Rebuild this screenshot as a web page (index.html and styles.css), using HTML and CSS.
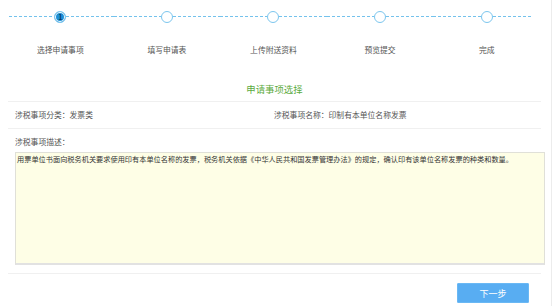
FILE: index.html
```html
<!DOCTYPE html>
<html lang="zh-CN">
<head>
    <meta charset="UTF-8">
    <meta name="viewport" content="width=device-width, initial-scale=1.0">
    <title>申请事项选择</title>
    <link rel="stylesheet" href="styles.css">
</head>
<body>
    <div class="page">
        <div class="steps">
            <div class="step step-first active">
                <div class="track"><span class="seg"></span><span class="dot">1</span><span class="seg"></span></div>
                <div class="step-label">选择申请事项</div>
            </div>
            <div class="step">
                <div class="track"><span class="seg"></span><span class="dot"></span><span class="seg"></span></div>
                <div class="step-label">填写申请表</div>
            </div>
            <div class="step">
                <div class="track"><span class="seg"></span><span class="dot"></span><span class="seg"></span></div>
                <div class="step-label">上传附送资料</div>
            </div>
            <div class="step">
                <div class="track"><span class="seg"></span><span class="dot"></span><span class="seg"></span></div>
                <div class="step-label">预览提交</div>
            </div>
            <div class="step step-last">
                <div class="track"><span class="seg"></span><span class="dot"></span><span class="seg"></span></div>
                <div class="step-label">完成</div>
            </div>
        </div>

        <div class="content">
            <h2 class="section-title">申请事项选择</h2>

            <div class="info-row">
                <div>涉税事项分类：发票类</div>
                <div>涉税事项名称：印制有本单位名称发票</div>
            </div>

            <div class="desc">
                <div class="desc-label">涉税事项描述：</div>
                <textarea class="desc-box" readonly>用票单位书面向税务机关要求使用印有本单位名称的发票，税务机关依据《中华人民共和国发票管理办法》的规定，确认印有该单位名称发票的种类和数量。</textarea>
            </div>

            <div class="actions">
                <button class="next-button">下一步</button>
            </div>
        </div>
    </div>
</body>
</html>
```

FILE: styles.css
```css
body {
    margin: 0;
    font-family: "Noto Sans CJK SC", "Liberation Sans", sans-serif;
    background-color: #fff;
    color: #555;
}

.page {
    width: 551px;
    height: 306px;
    border-right: 1px solid #ececec;
    overflow: hidden;
}

/* Step bar */
.steps {
    display: flex;
    margin-left: 7px;
    width: 533px;
}

.step {
    flex: 1;
    padding-top: 10px;
}

.track {
    display: flex;
    align-items: center;
    height: 13px;
}

.seg {
    flex: 1;
    height: 1px;
    background-image: repeating-linear-gradient(to right, #74c2ec 0 3px, transparent 3px 5px);
}

.step-first .seg:first-child {
    background-position: 2px 0;
    background-repeat: no-repeat;
}

.step-last .seg:last-child {
    background-size: 38px 1px;
    background-repeat: no-repeat;
}

.dot {
    width: 10px;
    height: 10px;
    border: 1.5px solid #7cc6ee;
    border-radius: 50%;
    background-color: #fff;
    font-size: 7px;
    line-height: 10px;
    text-align: center;
    color: #0c3c66;
    font-weight: bold;
}

.active .dot {
    background-color: #1c8fd6;
    box-shadow: inset 0 0 0 1px #fff;
}

.step-label {
    margin-top: 21px;
    font-size: 7.8px;
    line-height: 12px;
    text-align: center;
    color: #555;
}

/* Main content */
.content {
    margin-left: 8px;
    width: 533px;
}

.section-title {
    margin: 26px 0 0;
    padding-bottom: 5px;
    font-size: 9.4px;
    line-height: 14px;
    font-weight: normal;
    text-align: center;
    color: #5aaa3c;
    border-bottom: 1px solid #f0f0f0;
}

.info-row {
    display: grid;
    grid-template-columns: 259px 1fr;
    padding: 7px 0 7px 7px;
    font-size: 7.8px;
    line-height: 12px;
    color: #555;
    border-bottom: 1px solid #f0f0f0;
}

.desc {
    padding: 7px 0 8px 7px;
    border-bottom: 1px solid #f0f0f0;
}

.desc-label {
    font-size: 7.8px;
    line-height: 12px;
    color: #555;
}

.desc-box {
    display: block;
    margin-top: 4px;
    width: 530px;
    height: 113px;
    box-sizing: border-box;
    padding: 1px 1px;
    border: 1px solid #e0e0d8;
    border-bottom: 2px solid #e2e2e2;
    background-color: #fefee6;
    font-family: "Noto Sans CJK SC", sans-serif;
    font-size: 7.2px;
    line-height: 10px;
    color: #333;
    resize: none;
    outline: none;
}

.actions {
    display: flex;
    justify-content: flex-end;
    padding: 9px 12px 0 0;
}

.next-button {
    width: 72px;
    height: 20px;
    padding: 0;
    border: 1px solid #6ab8f4;
    border-radius: 1px;
    background-color: #58adf2;
    color: #fff;
    font-family: "Noto Sans CJK SC", sans-serif;
    font-size: 9px;
    cursor: pointer;
}

.next-button:hover {
    background-color: #3f9de8;
}
```
